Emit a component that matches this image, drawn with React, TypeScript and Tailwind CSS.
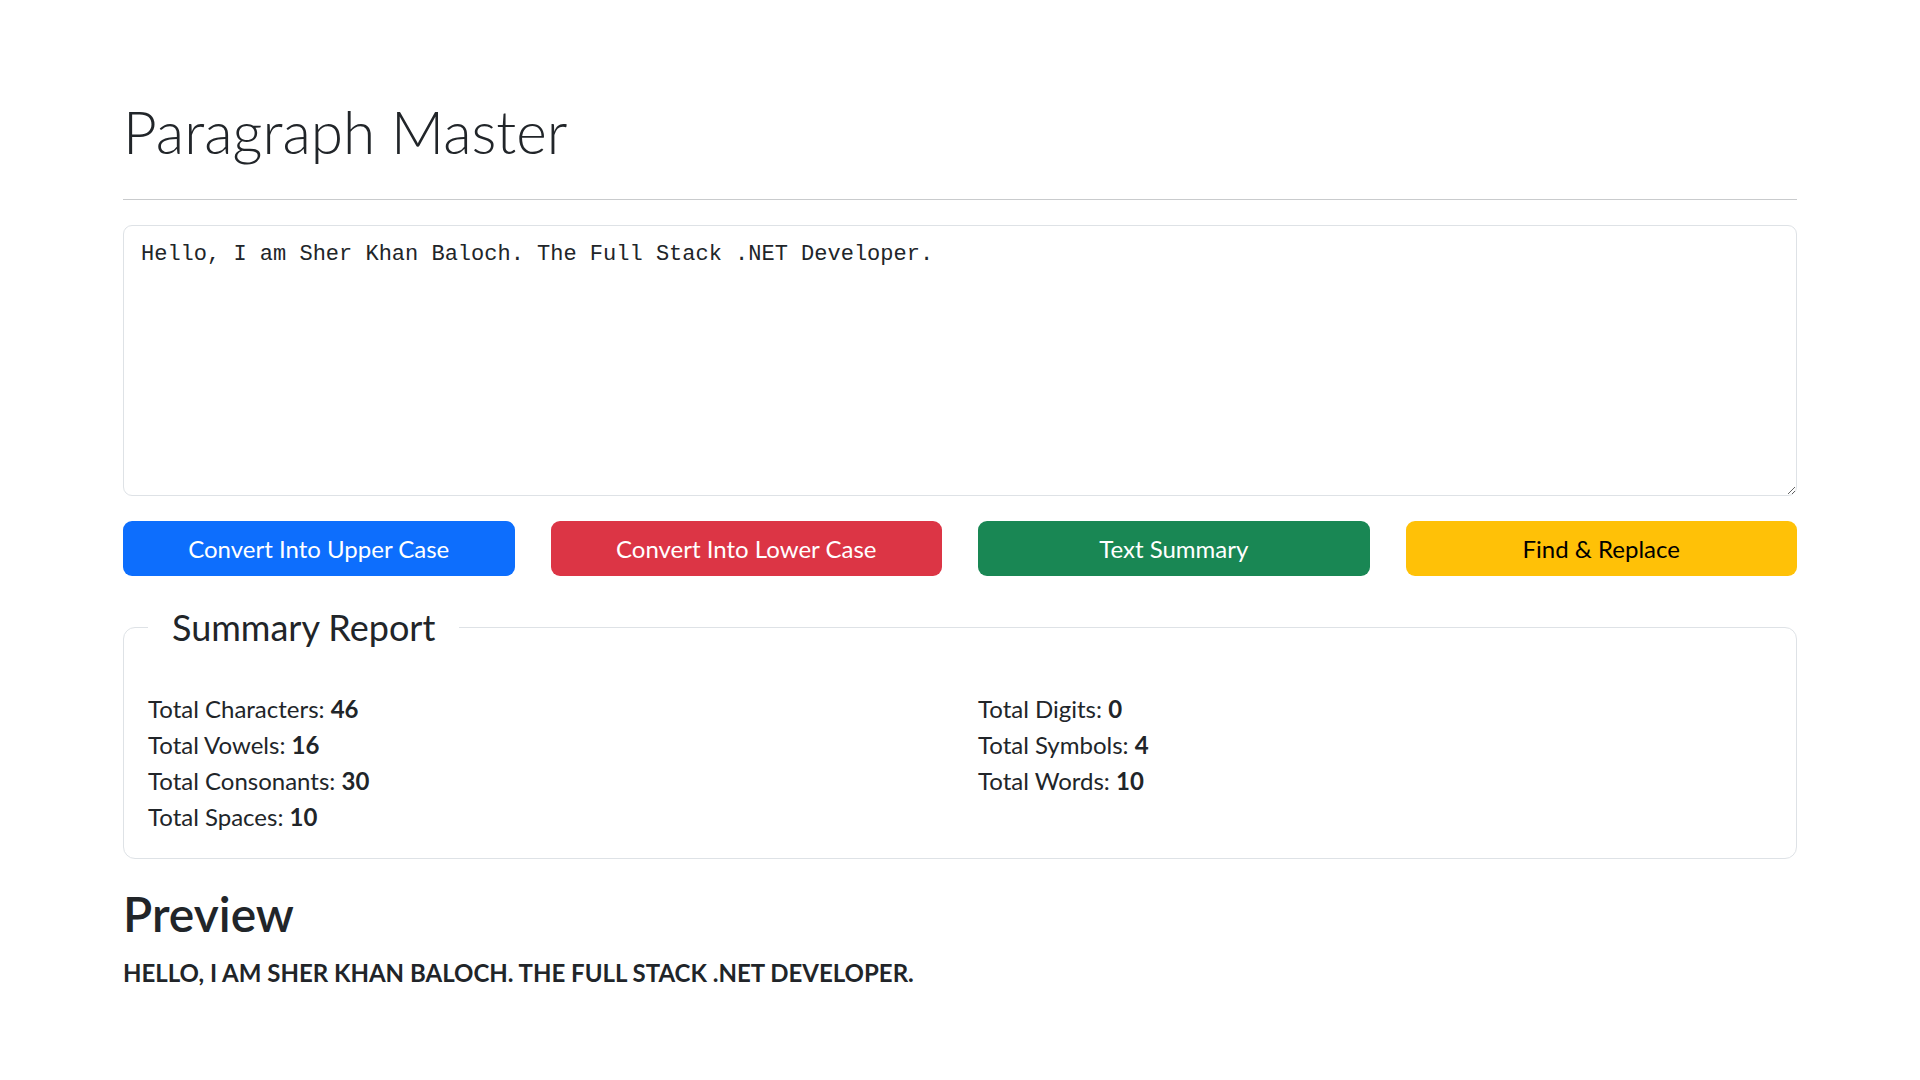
import React from "react";

const text = "Hello, I am Sher Khan Baloch. The Full Stack .NET Developer.";

function Stat({ label, value }: { label: string; value: string }) {
  return (
    <p className="m-0 h-[36px] leading-[36px]">
      {label}: <b className="font-bold">{value}</b>
    </p>
  );
}

export default function App() {
  return (
    <div className="min-h-screen bg-white text-[#212529] font-['Lato','Noto_Sans',sans-serif] text-[24px] leading-[36px]">
      <div className="mx-auto w-[1674px] pt-[95px]">
        <h1 className="m-0 h-[72px] text-[58.5px] font-light leading-[72px]">Paragraph Master</h1>
        <hr className="mt-[32px] mb-0 border-0 border-t-[1.5px] border-[#c9cbcd]" />
        <textarea
          defaultValue={text}
          className="mt-[25px] block h-[271px] w-full resize-y rounded-[9px] border-[1.5px] border-[#dee2e6] bg-white px-[17px] pt-[11px] pb-[9px] font-['Liberation_Mono',monospace] text-[22px] leading-[36px] text-[#212529] outline-none"
        />
        <div className="mt-[25px] grid grid-cols-4 gap-[36px]">
          <button className="h-[55px] rounded-[9px] bg-[#0d6efd] text-[24px] text-white">Convert Into Upper Case</button>
          <button className="h-[55px] rounded-[9px] bg-[#dc3545] text-[24px] text-white">Convert Into Lower Case</button>
          <button className="h-[55px] rounded-[9px] bg-[#198754] text-[24px] text-white">Text Summary</button>
          <button className="h-[55px] rounded-[9px] bg-[#ffc107] text-[24px] text-black">Find &amp; Replace</button>
        </div>
        <fieldset className="mt-[30px] rounded-[12px] border-[1.5px] border-[#dee2e6] px-[24px] pb-[23px]">
          <legend className="px-[24px] text-[36px] leading-[43px]">Summary Report</legend>
          <div className="mt-[42px] grid grid-cols-2 gap-x-[36px]">
            <div>
              <Stat label="Total Characters" value="46" />
              <Stat label="Total Vowels" value="16" />
              <Stat label="Total Consonants" value="30" />
              <Stat label="Total Spaces" value="10" />
            </div>
            <div>
              <Stat label="Total Digits" value="0" />
              <Stat label="Total Symbols" value="4" />
              <Stat label="Total Words" value="10" />
            </div>
          </div>
        </fieldset>
        <h2 className="mt-[26px] m-0 h-[58px] text-[48px] font-semibold leading-[58px]">Preview</h2>
        <p className="mt-[12px] font-bold">HELLO, I AM SHER KHAN BALOCH. THE FULL STACK .NET DEVELOPER.</p>
      </div>
    </div>
  );
}
